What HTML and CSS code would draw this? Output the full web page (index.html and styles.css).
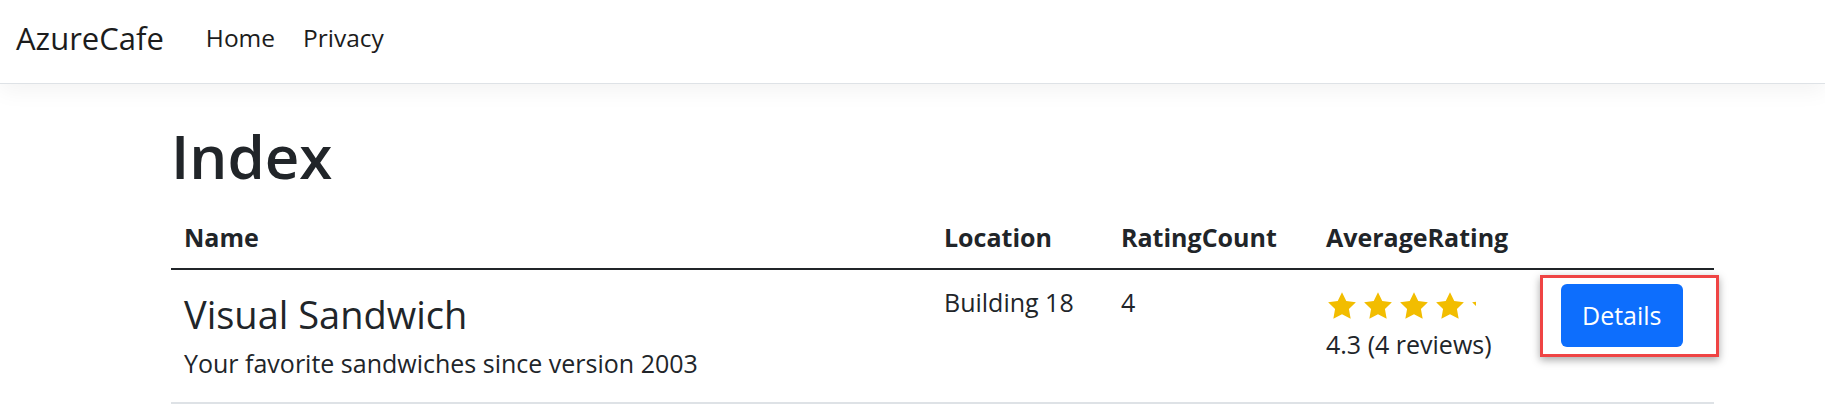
FILE: index.html
```html
<!DOCTYPE html>
<html lang="en">
<head>
  <meta charset="UTF-8" />
  <title>Index - AzureCafe</title>
  <link rel="stylesheet" href="styles.css">
</head>
<body>

  <!-- Navbar -->
  <header class="navbar">
    <a class="brand" href="#">AzureCafe</a>
    <nav class="nav-links">
      <a href="#">Home</a>
      <a href="#">Privacy</a>
    </nav>
  </header>

  <!-- Main -->
  <main class="container">
    <h1>Index</h1>

    <table class="cafe-table">
      <thead>
        <tr>
          <th class="col-name">Name</th>
          <th class="col-location">Location</th>
          <th class="col-count">RatingCount</th>
          <th class="col-avg">AverageRating</th>
          <th class="col-action"></th>
        </tr>
      </thead>
      <tbody>
        <tr>
          <td>
            <div class="cafe-name">Visual Sandwich</div>
            <div class="cafe-desc">Your favorite sandwiches since version 2003</div>
          </td>
          <td>Building 18</td>
          <td>4</td>
          <td>
            <div class="stars">
              <span class="star"><svg viewBox="0 0 24 24"><path d="M12 1.6l3.2 6.6 7.2 1-5.2 5.1 1.3 7.2L12 18.1l-6.5 3.4 1.3-7.2L1.6 9.2l7.2-1z"/></svg></span>
              <span class="star"><svg viewBox="0 0 24 24"><path d="M12 1.6l3.2 6.6 7.2 1-5.2 5.1 1.3 7.2L12 18.1l-6.5 3.4 1.3-7.2L1.6 9.2l7.2-1z"/></svg></span>
              <span class="star"><svg viewBox="0 0 24 24"><path d="M12 1.6l3.2 6.6 7.2 1-5.2 5.1 1.3 7.2L12 18.1l-6.5 3.4 1.3-7.2L1.6 9.2l7.2-1z"/></svg></span>
              <span class="star"><svg viewBox="0 0 24 24"><path d="M12 1.6l3.2 6.6 7.2 1-5.2 5.1 1.3 7.2L12 18.1l-6.5 3.4 1.3-7.2L1.6 9.2l7.2-1z"/></svg></span>
              <span class="star" style="width: 6px"><svg viewBox="0 0 24 24"><path d="M12 1.6l3.2 6.6 7.2 1-5.2 5.1 1.3 7.2L12 18.1l-6.5 3.4 1.3-7.2L1.6 9.2l7.2-1z"/></svg></span>
            </div>
            <div class="rating-text">4.3 (4 reviews)</div>
          </td>
          <td class="action-cell">
            <span class="highlight"></span>
            <a class="btn" href="#">Details</a>
          </td>
        </tr>
      </tbody>
    </table>
  </main>

</body>
</html>
```

FILE: styles.css
```css
* {
  margin: 0;
  padding: 0;
  box-sizing: border-box;
}

body {
  background: #fff;
  font-family: "Open Sans", "Noto Sans", sans-serif;
  font-size: 25px;
  line-height: 1.5;
  color: #212529;
}

a {
  text-decoration: none;
  color: inherit;
}

.navbar {
  height: 84px;
  display: flex;
  align-items: center;
  padding-left: 16px;
  padding-bottom: 7px;
  border-bottom: 1px solid #dee2e6;
  box-shadow: 0 7px 21px rgba(0, 0, 0, 0.05);
}

.brand {
  font-size: 31px;
  color: #1c1c1c;
  margin-right: 42px;
}

.nav-links {
  display: flex;
  gap: 28px;
  font-size: 24.5px;
}

.nav-links a {
  color: #1c1c1c;
}

.container {
  width: 1543px;
  margin-left: 171px;
}

h1 {
  font-size: 60px;
  font-weight: 600;
  line-height: 1.2;
  padding-top: 36px;
  margin-bottom: 10.5px;
}

.cafe-table {
  width: 100%;
  border-collapse: collapse;
}

.cafe-table th,
.cafe-table td {
  text-align: left;
  vertical-align: top;
  padding: 14px 13px;
}

.cafe-table th {
  font-weight: 700;
  padding-top: 16px;
  padding-bottom: 12px;
  border-bottom: 2px solid #212529;
}

.cafe-table td {
  padding-bottom: 20px;
  border-bottom: 2px solid #dee2e6;
}

.col-name { width: 760px; }
.col-location { width: 177px; }
.col-count { width: 205px; }
.col-avg { width: 235px; }

.cafe-name {
  font-size: 38px;
  line-height: 1.2;
  margin-top: 8px;
  margin-bottom: 7px;
}

.stars {
  display: flex;
  gap: 4px;
  height: 32px;
  margin-top: 6px;
}

.star {
  display: block;
  width: 32px;
  height: 32px;
  overflow: hidden;
  flex: none;
}

.star svg {
  width: 32px;
  height: 32px;
  fill: #f2bd00;
  display: block;
}

.rating-text {
  margin-top: 3.5px;
}

.action-cell {
  position: relative;
}

.btn {
  display: inline-block;
  background: #0d6efd;
  color: #fff;
  border-radius: 6px;
  padding: 0 21px;
  height: 63px;
  line-height: 63px;
}

.highlight {
  position: absolute;
  left: -8px;
  top: 5px;
  width: 179px;
  height: 82px;
  border: 3px solid #ef4444;
  box-shadow: 0 3px 8px rgba(0, 0, 0, 0.35);
}
```
